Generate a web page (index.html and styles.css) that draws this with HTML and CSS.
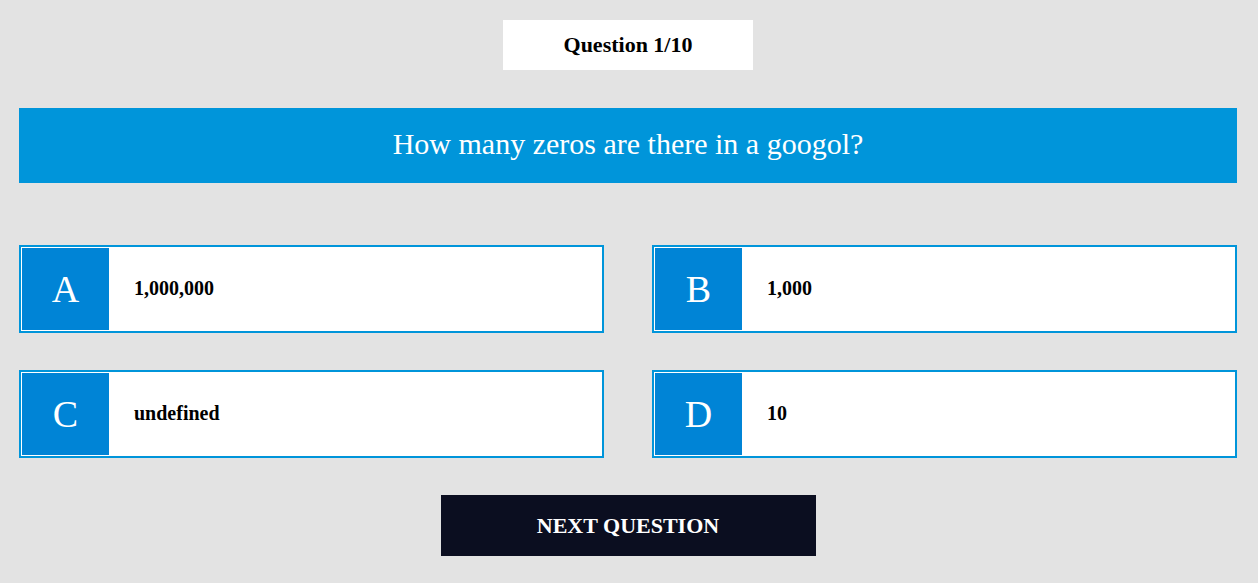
FILE: index.html
```html
<!DOCTYPE html>
<html>
<head>
<meta charset="utf-8">
<link rel="stylesheet" href="styles.css">
</head>
<body>
<main class="quiz">
  <div class="counter">Question 1/10</div>
  <div class="question">How many zeros are there in a googol?</div>
  <div class="options">
    <div class="option"><span class="letter">A</span><span class="answer">1,000,000</span></div>
    <div class="option"><span class="letter">B</span><span class="answer">1,000</span></div>
    <div class="option"><span class="letter">C</span><span class="answer">undefined</span></div>
    <div class="option"><span class="letter">D</span><span class="answer">10</span></div>
  </div>
  <button class="next">NEXT QUESTION</button>
</main>
</body>
</html>
```
FILE: styles.css
```css
html, body {
  margin: 0;
  padding: 0;
  background: #e3e3e3;
  font-family: "Liberation Serif", "Times New Roman", serif;
}
.quiz {
  display: flex;
  flex-direction: column;
  align-items: center;
  padding: 20px 21px 0 19px;
}
.counter {
  width: 250px;
  height: 50px;
  background: #fff;
  color: #000;
  font-weight: bold;
  font-size: 22px;
  display: flex;
  align-items: center;
  justify-content: center;
}
.question {
  margin-top: 38px;
  align-self: stretch;
  height: 75px;
  box-sizing: border-box;
  padding-bottom: 3px;
  background: #0095da;
  color: #fff;
  font-size: 30px;
  display: flex;
  align-items: center;
  justify-content: center;
}
.options {
  margin-top: 62px;
  align-self: stretch;
  display: grid;
  grid-template-columns: 1fr 1fr;
  column-gap: 48px;
  row-gap: 37px;
}
.option {
  height: 88px;
  box-sizing: border-box;
  border: 2px solid #0095da;
  padding: 1px;
  background: #fff;
  display: flex;
  align-items: stretch;
}
.letter {
  width: 87px;
  background: #0084d6;
  color: #fff;
  font-size: 38px;
  display: flex;
  align-items: center;
  justify-content: center;
}
.answer {
  padding-left: 25px;
  padding-bottom: 1px;
  display: flex;
  align-items: center;
  font-weight: bold;
  font-size: 20px;
  color: #000;
}
.next {
  margin-top: 37px;
  width: 375px;
  height: 61px;
  border: none;
  background: #0b0e20;
  color: #fff;
  font-family: "Liberation Serif", "Times New Roman", serif;
  font-weight: bold;
  font-size: 22px;
  padding: 0;
}
```
